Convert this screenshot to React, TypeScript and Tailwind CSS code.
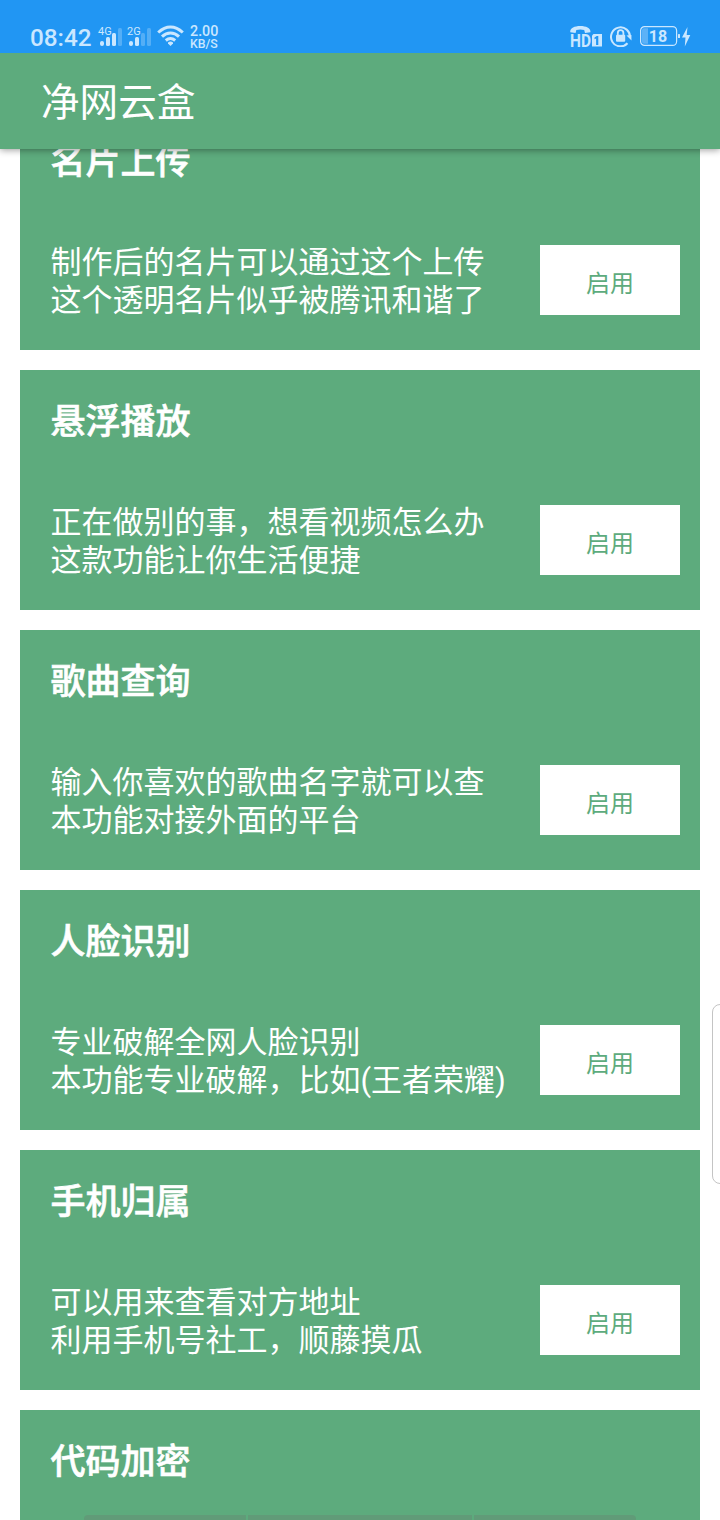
type Feature = {
  title: string;
  lines: string[];
};

const features: Feature[] = [
  { title: "名片上传", lines: ["制作后的名片可以通过这个上传", "这个透明名片似乎被腾讯和谐了"] },
  { title: "悬浮播放", lines: ["正在做别的事，想看视频怎么办", "这款功能让你生活便捷"] },
  { title: "歌曲查询", lines: ["输入你喜欢的歌曲名字就可以查", "本功能对接外面的平台"] },
  { title: "人脸识别", lines: ["专业破解全网人脸识别", "本功能专业破解，比如(王者荣耀)"] },
  { title: "手机归属", lines: ["可以用来查看对方地址", "利用手机号社工，顺藤摸瓜"] },
  { title: "代码加密", lines: [] },
];

const Signal = ({ label, level }: { label: string; level: number }) => (
  <svg width="25" height="24" viewBox="0 0 25 24" fill="currentColor">
    <text x="0" y="9.5" fontSize="11" fontFamily="Roboto">
      {label}
    </text>
    <rect x="2" y="16" width="4" height="5" rx="2" />
    <rect x="8" y="12" width="4" height="9" rx="1.5" />
    <rect x="14" y="8" width="4" height="13" rx="1.5" opacity={level > 2 ? 1 : 0.3} />
    <rect x="20" y="3" width="4" height="18" rx="1.5" opacity={0.3} />
  </svg>
);

const Wifi = () => (
  <svg width="28" height="22" viewBox="0 0 28 22" fill="none" stroke="currentColor" strokeWidth="3">
    <path d="M1.2 7.5C9 .3 18 .3 25.8 7.5" />
    <path d="M5 11.7C10.2 6.8 16.8 6.8 22 11.7" />
    <path d="M8.8 15.5C12 12.7 15 12.7 18.2 15.5" />
    <path d="M11 17.6q2.5-2 5 0v1l-2.5 2.4-2.5-2.4z" fill="currentColor" stroke="none" />
  </svg>
);

const HdCall = () => (
  <svg width="33" height="26" viewBox="0 0 33 26" fill="currentColor">
    <path d="M.3 7.2C-.3 3.5 4 1 10.3 1S21 3.5 20.4 7.2L15 8 14.2 5Q10.3 3.8 6.3 5L5.6 8z" />
    <text x="0" y="21.6" fontSize="17.5" fontWeight="700" fontFamily="Roboto" textLength="21" lengthAdjust="spacingAndGlyphs">
      HD
    </text>
    <path d="M23.5 9H32v12.5H22V10.5z" />
    <path d="M24.5 12.5l2.3-1.5h1.5v9h-2.2v-6.5l-1.6.8z" className="fill-[#2196f3]" />
  </svg>
);

const RotationLock = () => (
  <svg width="22" height="22" viewBox="0 0 22 22" fill="none" stroke="currentColor">
    <path d="M17.5 18.3A9.5 9.5 0 1 1 20 12.5" strokeWidth="2" />
    <path d="M16.5 10.5l4.9-.5.1 5.6z" fill="currentColor" stroke="none" />
    <path d="M7.8 10V8a2.8 2.8 0 0 1 5.6 0v2" strokeWidth="1.8" />
    <rect x="6" y="9.8" width="9.2" height="7" rx="1" fill="currentColor" stroke="none" />
  </svg>
);

const Battery = () => (
  <svg width="52" height="22" viewBox="0 0 52 22" fill="currentColor">
    <rect x="0.6" y="1.6" width="36" height="18.8" rx="4" fill="none" stroke="currentColor" strokeWidth="1.2" />
    <path d="M4 3.2h4v15.6H4A2 2 0 0 1 2 16.8V5.2A2 2 0 0 1 4 3.2z" opacity="0.35" />
    <text x="18" y="16.8" fontSize="16" fontWeight="700" fontFamily="Roboto" textAnchor="middle">
      18
    </text>
    <rect x="38" y="9" width="2" height="4" rx="0.5" />
    <path d="M47.5 2L42 12.5h3.5L44.8 21.5 50.3 10h-3.6z" />
  </svg>
);

const StatusBar = () => (
  <div className="relative z-20 flex h-[53px] shrink-0 items-start justify-between bg-[#2196f3] pt-[25px] pr-7 pl-[30px] text-[#cae7ff]">
    <div className="flex items-start">
      <div className="w-[68px] text-[24.3px] leading-[26px] font-medium">08:42</div>
      <div className="flex gap-1">
        <Signal label="4G" level={3} />
        <Signal label="2G" level={2} />
      </div>
      <div className="pl-[5px]">
        <Wifi />
      </div>
      <div className="pl-[5px] font-medium">
        <div className="text-[14.3px] leading-[13px]">2.00</div>
        <div className="text-[12.3px] leading-[13px]">KB/S</div>
      </div>
    </div>
    <div className="flex items-start gap-[7px]">
      <HdCall />
      <RotationLock />
      <div className="pl-px">
        <Battery />
      </div>
    </div>
  </div>
);

const FeatureCard = ({ title, lines }: Feature) => (
  <div className="h-60 shrink-0 bg-[#5dab7d] pt-[27px] pr-5 pl-[30.5px] text-white">
    <h2 className="text-[35px] leading-[52px] font-medium [-webkit-text-stroke:0.6px_white]">{title}</h2>
    {lines.length > 0 && (
      <div className="flex justify-between pt-14">
        <div className="-mt-px text-[31px] leading-[38px] whitespace-nowrap">
          {lines.map((line) => (
            <p key={line}>{line}</p>
          ))}
        </div>
        <button className="h-[70px] w-[140px] shrink-0 bg-white pt-[7px] text-2xl text-[#5dab7d]">
          启用
        </button>
      </div>
    )}
  </div>
);

export default function App() {
  return (
    <div className="relative flex h-[1520px] w-[720px] flex-col overflow-hidden bg-white font-['Roboto','Noto_Sans_CJK_SC',sans-serif]">
      <StatusBar />
      <header className="relative z-10 flex h-24 shrink-0 items-center bg-[#5dab7d] pt-[3px] pl-[41px] text-[38.6px] text-white shadow-[0_1px_7px_rgba(0,0,0,0.4)]">
        净网云盒
      </header>
      <main className="flex min-h-0 flex-1 flex-col overflow-hidden px-5">
        <div className="-mt-[39px] flex flex-col gap-5">
          {features.map((feature) => (
            <FeatureCard key={feature.title} {...feature} />
          ))}
        </div>
      </main>
      {/* edge panel handle */}
      <div className="absolute top-[1004px] -right-2 h-[180px] w-4 rounded-lg border border-[#c4c4c4] bg-white" />
      {/* gesture hints */}
      <div className="absolute bottom-0 left-[84px] flex h-[5px] w-[552px] gap-0.5 overflow-hidden rounded-t-sm">
        <div className="w-[162px] bg-[#619b78]" />
        <div className="w-[224px] bg-[#619b78]" />
        <div className="w-[162px] bg-[#619b78]" />
      </div>
    </div>
  );
}
